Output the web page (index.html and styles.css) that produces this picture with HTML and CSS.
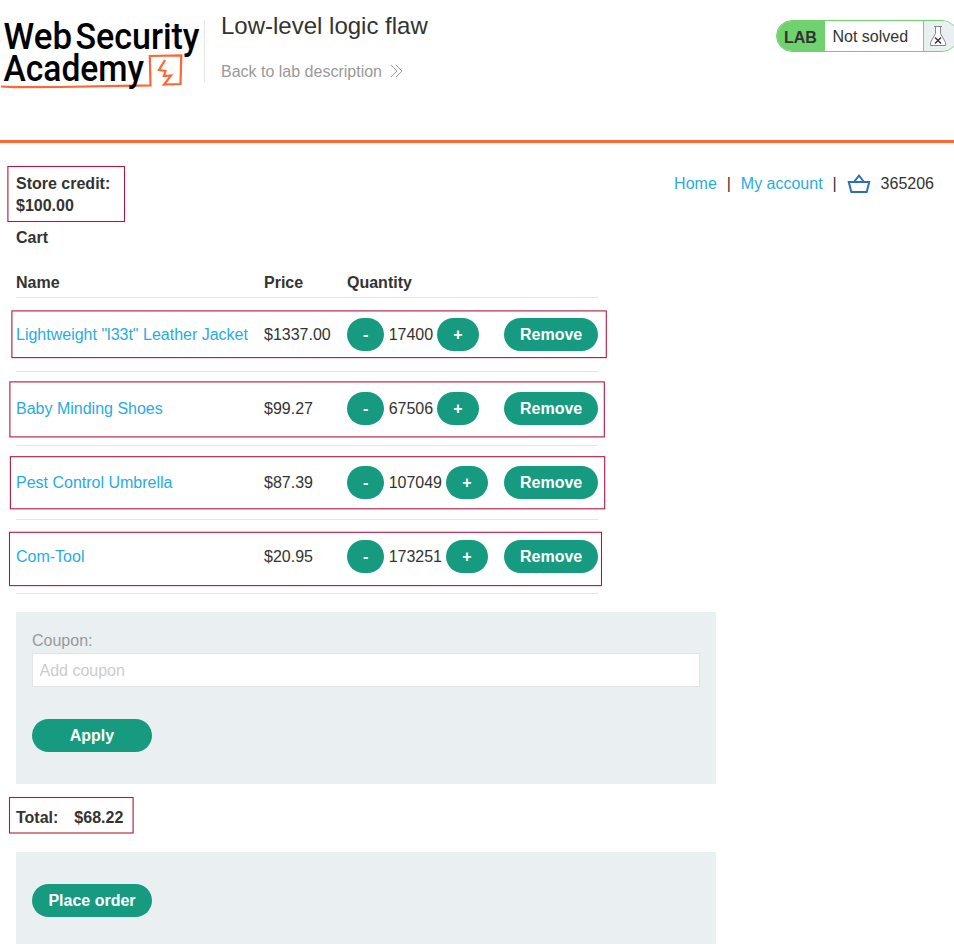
FILE: index.html
```html
<!DOCTYPE html>
<html lang="en">
<head>
<meta charset="utf-8">
<title>Low-level logic flaw</title>
<link rel="stylesheet" href="styles.css">
</head>
<body>
<header class="academy-header">
  <svg class="logo" width="204" height="96" viewBox="0 0 204 96">
    <path d="M1 86.500 L14 87.200 L60 87 L120 85.800 L150.500 85.300 L149.800 56 L181.300 55.300 L180.500 84 L164 84.600 L171 75.500 L163.900 76 L165.500 71 L159 70 L165 60" fill="none" stroke="#ff6633" stroke-width="2.200"/>
    <g class="logo-text">
      <text x="3.500" y="48.600" textLength="68.500" lengthAdjust="spacingAndGlyphs">Web</text>
      <text x="75.500" y="48.600" textLength="124" lengthAdjust="spacingAndGlyphs">Security</text>
      <text x="3.500" y="81.200" textLength="140.500" lengthAdjust="spacingAndGlyphs">Academy</text>
    </g>
  </svg>
  <div class="title">
    <h2>Low-level logic flaw</h2>
    <a class="back">Back to lab description
      <svg width="13" height="14" viewBox="0 0 13 14"><path d="M1 1l6 6-6 6M6 1l6 6-6 6" fill="none" stroke="#999" stroke-width="1"/></svg>
    </a>
  </div>
  <div class="status">
    <span class="lab">LAB</span>
    <p>Not solved</p>
    <span class="flask">
      <svg width="18" height="22" viewBox="0 0 18 22"><path d="M5 1.500h8M6.500 1.500v7L1.500 17.500v3h15v-3L11.500 8.500v-7" fill="#fff" stroke="#888"/><path d="M6 12.500l6 6M12 12.500l-6 6" stroke="#333" stroke-width="1.400"/></svg>
    </span>
  </div>
</header>
<main class="store">
  <div class="topline">
    <p class="credit">Store credit:<br>$100.00</p>
    <nav>
      <a>Home</a><span>|</span><a>My account</a><span>|</span>
      <svg width="24" height="20" viewBox="0 0 24 20"><path d="M1.800 8h20.400l-2.500 10H4.300zM7 8L12 1.700l5 6.300" fill="none" stroke="#2b71b8" stroke-width="2"/></svg>
      <b>365206</b>
    </nav>
  </div>
  <h1>Cart</h1>
  <table>
    <thead><tr><th class="name">Name</th><th class="price">Price</th><th class="qty">Quantity</th><th></th></tr></thead>
    <tbody>
      <tr><td class="text"><a>Lightweight "l33t" Leather Jacket</a></td><td class="text">$1337.00</td><td><div class="count"><button>-</button><span>17400</span><button class="plus">+</button></div></td><td><button>Remove</button></td></tr>
      <tr><td class="text"><a>Baby Minding Shoes</a></td><td class="text">$99.27</td><td><div class="count"><button>-</button><span>67506</span><button class="plus">+</button></div></td><td><button>Remove</button></td></tr>
      <tr><td class="text"><a>Pest Control Umbrella</a></td><td class="text">$87.39</td><td><div class="count"><button>-</button><span>107049</span><button class="plus">+</button></div></td><td><button>Remove</button></td></tr>
      <tr><td class="text"><a>Com-Tool</a></td><td class="text">$20.95</td><td><div class="count"><button>-</button><span>173251</span><button class="plus">+</button></div></td><td><button>Remove</button></td></tr>
    </tbody>
  </table>
  <form class="panel coupon">
    <label for="coupon">Coupon:</label>
    <input id="coupon" type="text" placeholder="Add coupon">
    <button type="button" class="wide">Apply</button>
  </form>
  <div class="total"><span>Total:</span><span>$68.22</span></div>
  <form class="panel order"><button type="button" class="wide">Place order</button></form>
</main>
<svg class="marks" width="954" height="944" viewBox="0 0 954 944">
  <rect x="7.900" y="166.500" width="116.600" height="55"/>
  <rect x="11.900" y="310.900" width="594.400" height="46.700"/>
  <rect x="9.900" y="381.900" width="594.400" height="55"/>
  <rect x="10.400" y="456.700" width="594.300" height="52.100"/>
  <rect x="9.500" y="532.300" width="592" height="53.300"/>
  <rect x="9.500" y="797.500" width="123.600" height="35.500"/>
</svg>
</body>
</html>
```
FILE: styles.css
```css
* { box-sizing: border-box; }
body {
  margin: 0;
  height: 944px;
  overflow: hidden;
  background: #fff;
  color: #333332;
  font: 16px/22px "Liberation Sans", Arial, sans-serif;
}
h1, h2, p { margin: 0; }
a { color: #29abe2; }
.academy-header {
  display: flex;
  align-items: flex-start;
  height: 143px;
  border-bottom: 3px solid #ff6633;
}
.logo { flex: none; overflow: visible; }
.logo-text { font: 500 37.500px Roboto, sans-serif; fill: #000; }
.title {
  height: 62px;
  margin-top: 20px;
  padding-left: 16px;
  border-left: 1px solid #e4e4e4;
}
.title h2 { margin-top: -8px; font-size: 24px; font-weight: 400; line-height: 28px; }
.back { display: flex; align-items: center; gap: 8px; margin-top: 21px; color: #999; }
.back svg { margin-top: -2px; }
.status {
  display: flex;
  flex: none;
  width: 182px;
  height: 32px;
  margin: 20px -4px 0 auto;
  overflow: hidden;
  border: 1px solid #70d16f;
  border-radius: 16px;
  line-height: 31px;
}
.lab { width: 48px; padding-left: 7px; background: #70d16f; font-weight: 700; line-height: 33px; }
.status p { width: 98px; padding-left: 7.500px; }
.flask { display: flex; flex: 1; padding: 4px 0 0 5px; border-left: 1px solid #70d16f; background: #eaeff2; }
.store { width: 934px; padding: 30px 0 0 16px; }
.topline { display: flex; justify-content: space-between; height: 44px; }
.credit { font-weight: 700; }
nav { display: flex; height: 22px; }
nav span { width: 24px; text-align: center; }
nav svg { margin: 1px 10px 0 0; }
nav b { font-weight: 400; }
h1 { margin-top: 10px; font-size: 16px; line-height: 22px; }
table { margin-top: 18px; width: 582px; border-collapse: collapse; table-layout: fixed; }
th, td { padding: 0; text-align: left; border-bottom: 1px solid #e4e4e4; }
th { height: 30px; padding-top: 3px; }
td { height: 74px; }
td.text { padding-top: 2px; }
.name { width: 248px; }
.price { width: 83px; }
.qty { width: 157px; }
.count { display: flex; align-items: center; }
.count span { margin: 1px 4px 0 4.300px; }
button {
  display: block;
  height: 33px;
  padding: 0 16px;
  border: 0;
  border-radius: 17px;
  background: #169b80;
  color: #fff;
  font: 700 16px/33px "Liberation Sans", Arial, sans-serif;
}
.plus { width: 41.700px; }
.panel { width: 700px; padding: 16px; background: #eaeff2; }
.coupon { height: 172px; margin-top: 18px; padding-top: 18px; }
label { display: block; height: 23px; color: #999; }
input {
  display: block;
  width: 100%;
  height: 34px;
  padding: 2px 6.500px 0;
  border: 1px solid #e2e4e5;
  background: #fff;
  font: 16px "Liberation Sans", Arial, sans-serif;
}
input::placeholder { color: #ccc; }
.wide { width: 120px; margin-top: 32px; }
.total { display: flex; gap: 16px; height: 68px; padding-top: 23px; font-weight: 700; }
.order { height: 120px; }
.order .wide { margin-top: 16px; }
.marks { position: absolute; top: 0; left: 0; pointer-events: none; }
.marks rect { fill: none; stroke: #b2183f; stroke-width: 1.100; }
```
